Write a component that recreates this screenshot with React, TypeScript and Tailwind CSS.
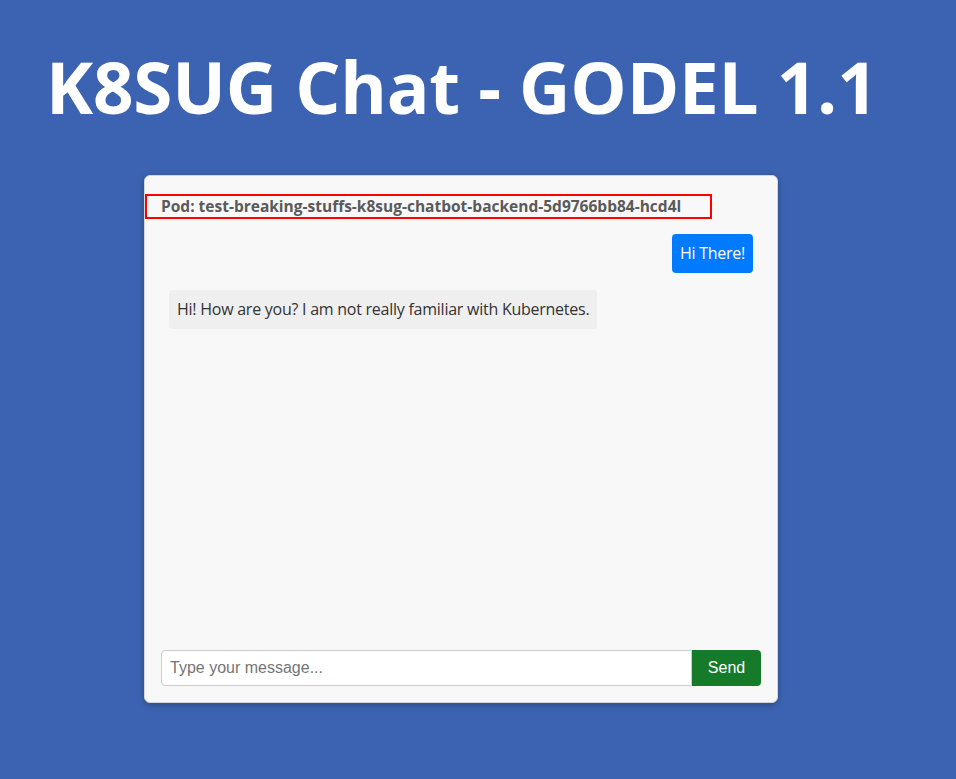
import React, { useState } from 'react';

type Message = { from: 'user' | 'bot'; text: string };

const MESSAGES: Message[] = [
  { from: 'user', text: 'Hi There!' },
  { from: 'bot', text: 'Hi! How are you? I am not really familiar with Kubernetes.' },
];

const App: React.FC = () => {
  const [draft, setDraft] = useState('');

  return (
    <div className="min-h-screen w-full bg-[#3b63b1] font-['Open_Sans',sans-serif]">
      <h1 className="pl-[46px] pt-[44px] text-[71px] font-bold leading-[86px] tracking-[-0.2px] text-white">
        K8SUG Chat - GODEL 1.1
      </h1>

      <div className="ml-[144px] mt-[45px] flex h-[528px] w-[634px] flex-col rounded-md border border-[#d6d6d6] bg-[#f8f8f8] px-4 pb-4 pt-[18px] shadow-[0_2px_6px_rgba(0,0,0,0.25)]">
        {/* pod name, highlighted */}
        <div className="-ml-4 w-[567px] border-2 border-[#ff0000] pl-[14px] text-[15.5px] font-bold leading-[21px] text-[#5a5a5a]">
          Pod: test-breaking-stuffs-k8sug-chatbot-backend-5d9766bb84-hcd4l
        </div>

        <div className="flex flex-1 flex-col gap-[17px] px-2 pt-[15px]">
          {MESSAGES.map((m, i) => (
            <div key={i} className={m.from === 'user' ? 'flex justify-end' : 'flex justify-start'}>
              <div
                className={
                  m.from === 'user'
                    ? 'rounded-[4px] bg-[#007bff] px-[8px] py-[10px] text-[16px] leading-[19px] tracking-[-0.25px] text-white'
                    : 'rounded-[4px] bg-[#efefef] px-[8px] py-[10px] text-[16px] leading-[19px] tracking-[-0.25px] text-[#333]'
                }
              >
                {m.text}
              </div>
            </div>
          ))}
        </div>

        <div className="flex h-9">
          <input
            value={draft}
            onChange={e => setDraft(e.target.value)}
            placeholder="Type your message..."
            className="h-9 flex-1 rounded-l-[4px] border border-[#cccccc] bg-white px-2 font-['Liberation_Sans',Arial,sans-serif] text-[16px] text-[#333] outline-none placeholder:text-[#757575]"
          />
          <button className="h-9 w-[69px] rounded-r-[4px] bg-[#167a2b] font-['Liberation_Sans',Arial,sans-serif] text-[16px] text-white">
            Send
          </button>
        </div>
      </div>
    </div>
  );
};

export default App;
